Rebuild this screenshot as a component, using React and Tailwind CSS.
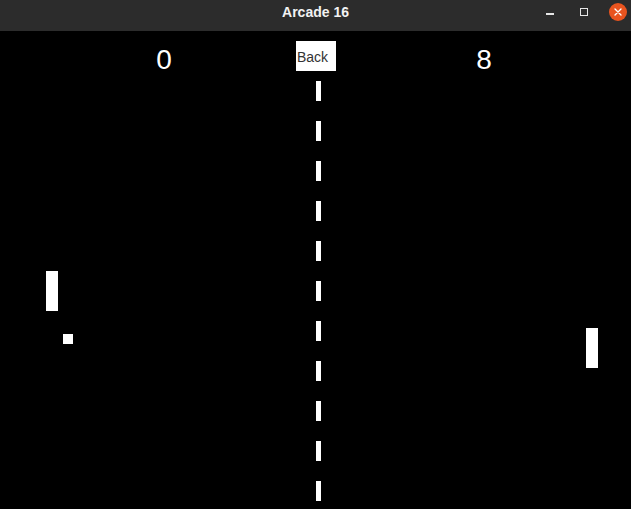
import React from 'react';

const dashes = Array.from({ length: 11 }, (_, i) => i);

const TitleBar = () => (
  <div className="h-[31px] bg-[#2c2c2c] grid grid-cols-[1fr_auto_1fr]">
    <div />
    <div className="pt-[5px] text-[14px] leading-[14px] font-bold text-[#f2f2f2] font-['Liberation_Sans',sans-serif]">
      Arcade 16
    </div>
    <div className="flex justify-end items-start pr-[4px]">
      <div className="mt-[13px] w-[8px] h-[1.5px] bg-[#e6e6e6]" />
      <div className="ml-[26px] mt-[8px] w-[8px] h-[8px] border border-[#e6e6e6]" />
      <div className="ml-[21px] mt-[3px] w-[18px] h-[18px] rounded-full bg-[#e9541f] flex items-center justify-center">
        <svg width="10" height="10" viewBox="0 0 10 10">
          <path d="M2 2 L8 8 M8 2 L2 8" stroke="#ffffff" strokeWidth="1.4" strokeLinecap="round" />
        </svg>
      </div>
    </div>
  </div>
);

export default function App() {
  return (
    <div className="w-[631px] h-[509px] bg-black flex flex-col overflow-hidden">
      <TitleBar />
      <div className="relative flex-1 bg-black font-['Liberation_Sans',Arial,sans-serif]">
        {/* scores */}
        <div className="absolute left-[144px] top-[15px] w-[40px] text-center text-white text-[28px] leading-[28px]">0</div>
        <div className="absolute left-[464px] top-[15px] w-[40px] text-center text-white text-[28px] leading-[28px]">8</div>

        {/* back button */}
        <button className="absolute left-[296px] top-[10px] w-[40px] h-[30px] bg-white text-[#333333] text-[14px] leading-[14px] flex items-center pl-[1px] pt-[2px]">
          Back
        </button>

        {/* net */}
        <div className="absolute left-[316px] top-[50px] flex flex-col gap-[20px]">
          {dashes.map((i) => (
            <div key={i} className="w-[5px] h-[20px] bg-white" />
          ))}
        </div>

        {/* paddles and ball */}
        <div className="absolute left-[46px] top-[240px] w-[12px] h-[40px] bg-white" />
        <div className="absolute left-[63px] top-[303px] w-[10px] h-[10px] bg-white" />
        <div className="absolute left-[586px] top-[297px] w-[12px] h-[40px] bg-white" />
      </div>
    </div>
  );
}
